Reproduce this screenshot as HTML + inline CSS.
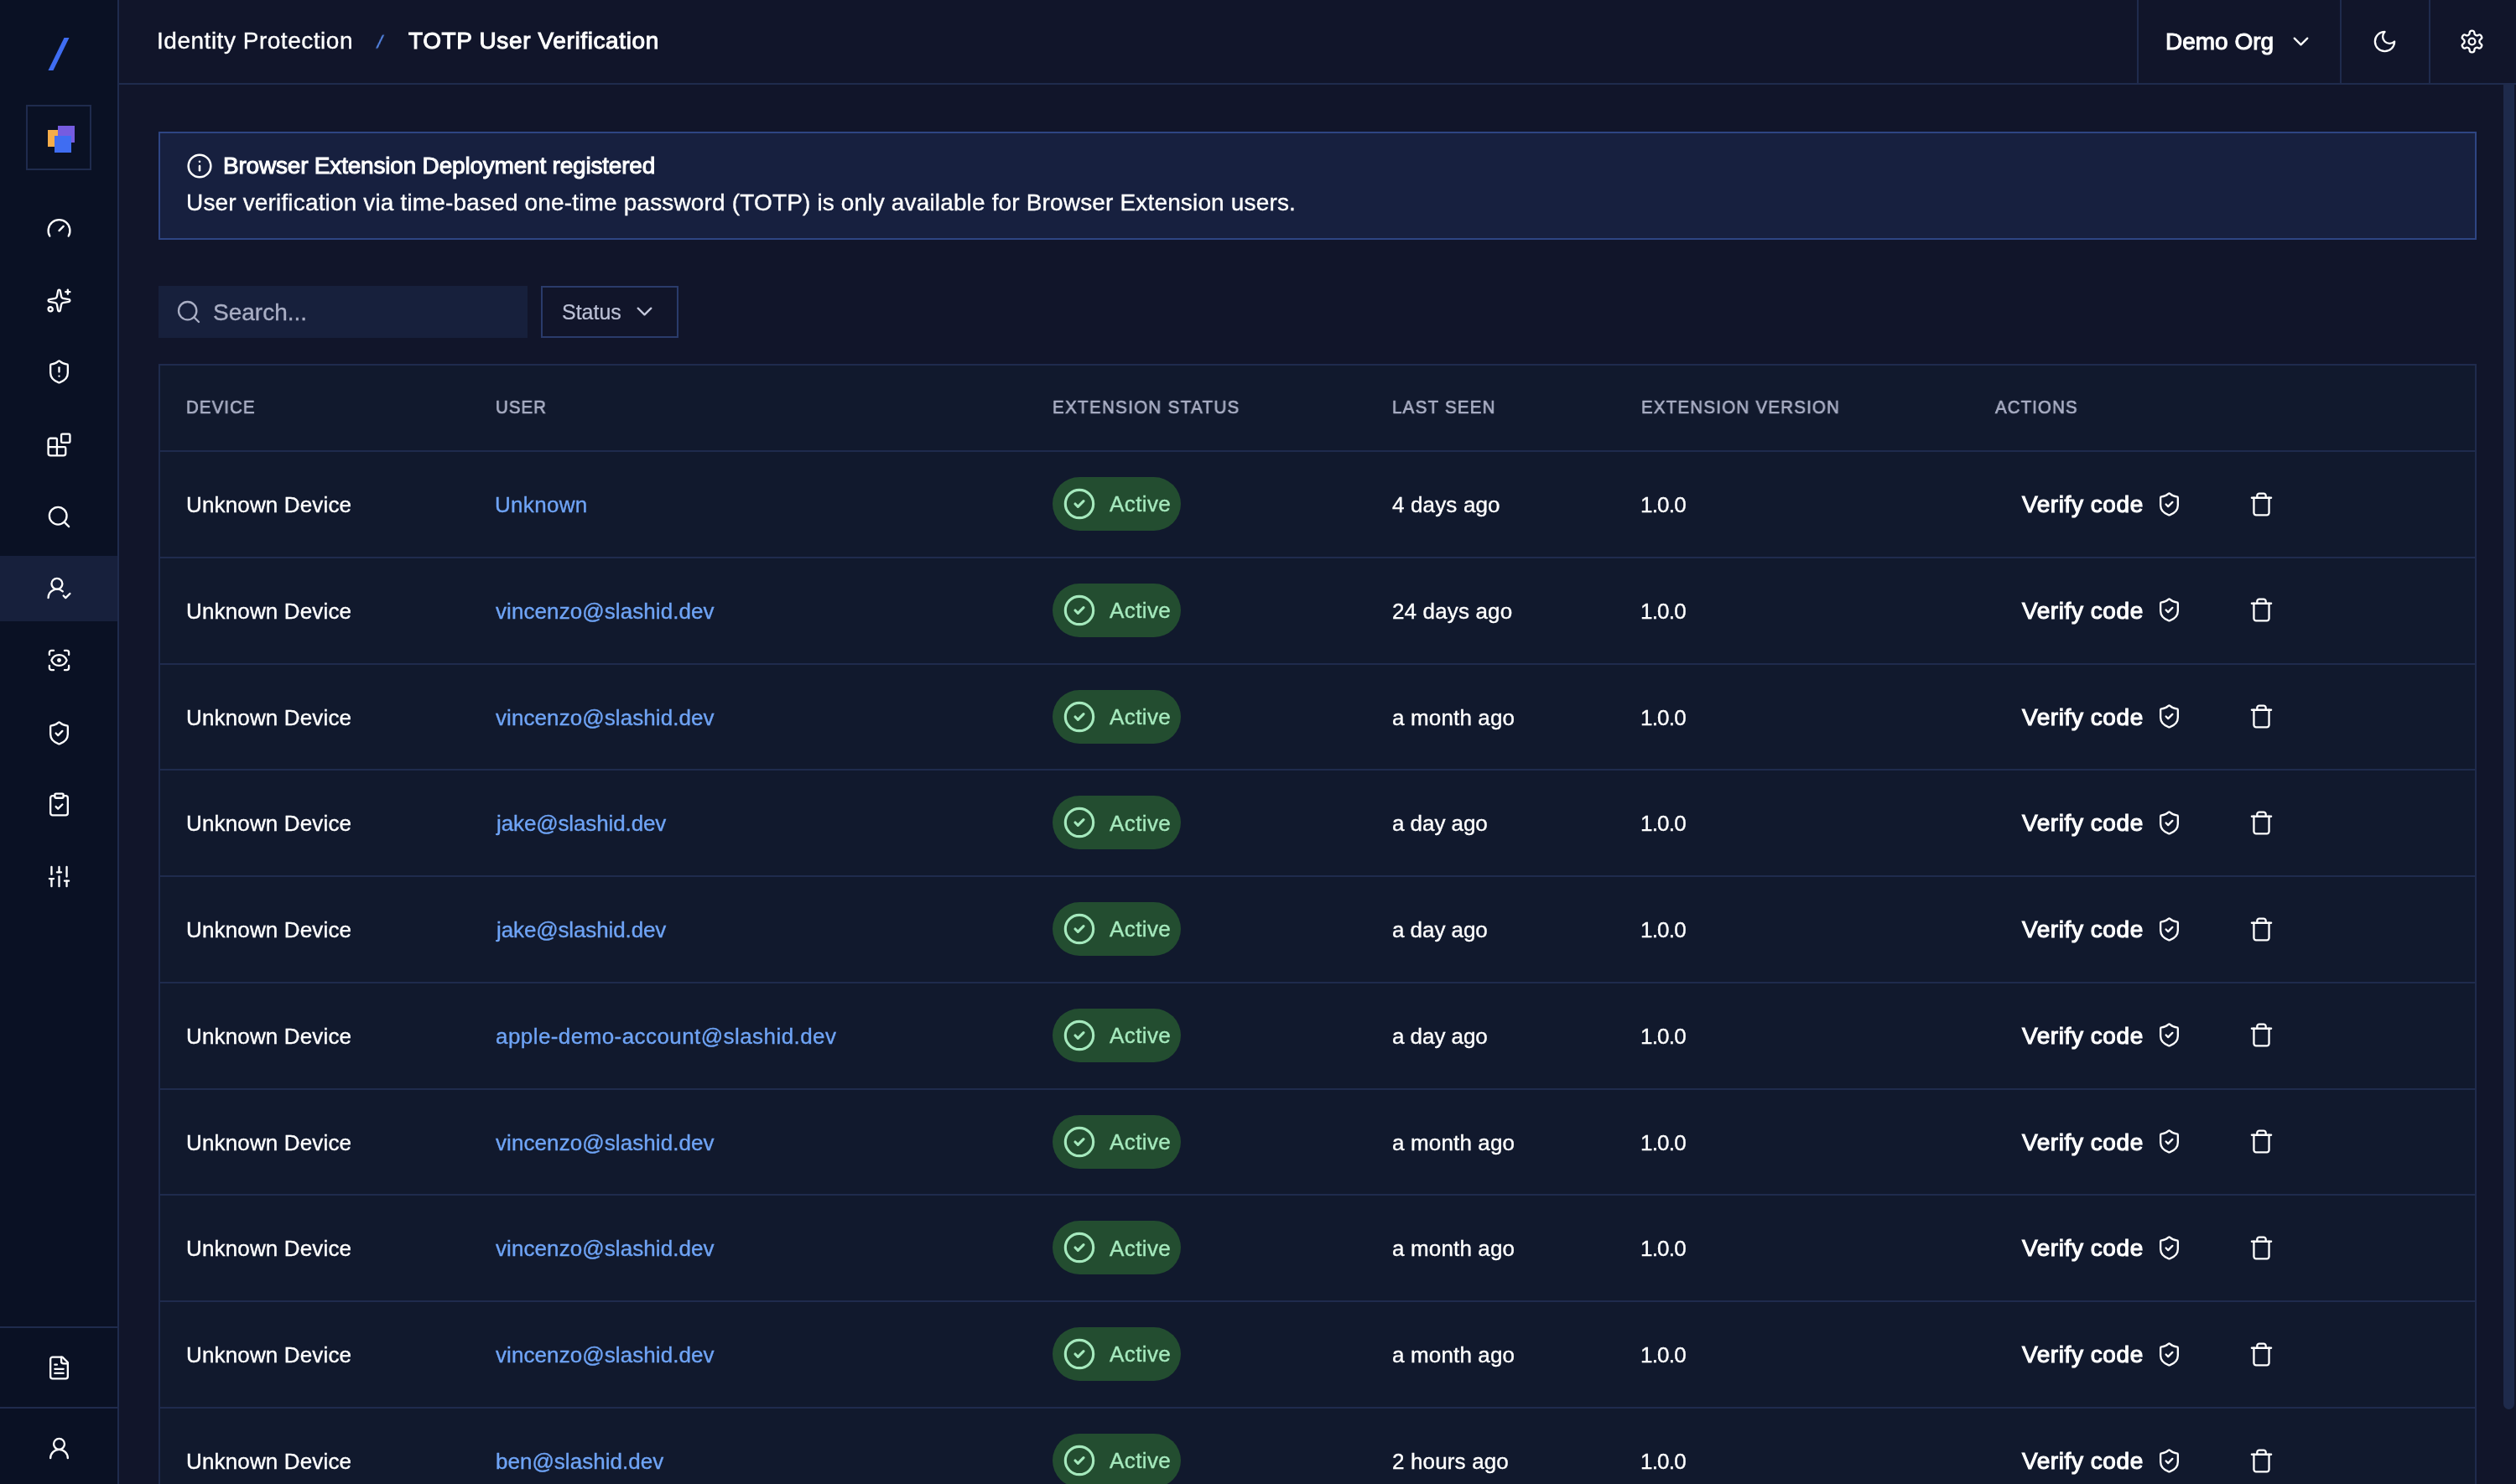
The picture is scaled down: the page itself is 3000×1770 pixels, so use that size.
<!DOCTYPE html>
<html lang="en">
<head>
<meta charset="utf-8">
<title>TOTP User Verification</title>
<style>
*{box-sizing:border-box;margin:0;padding:0}
html,body{width:3000px;height:1770px;overflow:hidden;background:#11152a}
body{position:relative;font-family:"Liberation Sans",sans-serif;color:#ffffff;-webkit-font-smoothing:antialiased}
.abs{position:absolute}
.bc,.al-t,.al-b,.s-t,.st-t,.th,.td,.badge-t{will-change:transform;-webkit-text-stroke-width:0.35px}
.ic{position:absolute;display:block;line-height:0}
.ic svg{display:block}
/* sidebar */
#side{position:absolute;left:0;top:0;width:142px;height:1770px;background:#0a1124;border-right:2px solid #1f2b4d}
.logo{position:absolute;left:67.3px;top:45px;width:6px;height:39px;background:#3f6df2;transform:skewX(-26deg)}
.org{position:absolute;left:31px;top:125px;width:78px;height:78px;border:2px solid #1f2b4d}
.sq{position:absolute;width:20px;height:20px}
.nav-active{position:absolute;left:0;width:140px;height:78px;background:#17203c}
.side-sep{position:absolute;left:0;width:140px;height:2px;background:#1f2b4d}
/* header */
#head{position:absolute;left:142px;top:0;width:2858px;height:101px;border-bottom:2px solid #1f2b4d;background:#11152a}
.bc{position:absolute;top:31px;font-size:28px;line-height:36px;white-space:nowrap}
.vdiv{position:absolute;top:0;width:2px;height:101px;background:#1f2b4d}
/* scrollbar */
#sb{position:absolute;left:2985px;top:101px;width:13px;height:1580px;background:#1e2a4b;border-radius:0 0 6.5px 6.5px}
/* alert */
#alert{position:absolute;left:189px;top:157px;width:2764px;height:129px;background:#17203f;border:2px solid #2e4583}
.al-t{position:absolute;left:75px;top:21px;font-size:28px;line-height:36px;white-space:nowrap;letter-spacing:-0.2px}
.semi{-webkit-text-stroke:1.0px #fff}
.al-b{position:absolute;left:31px;top:65px;font-size:28px;line-height:36px;white-space:nowrap;letter-spacing:0.157px}
/* search */
#search{position:absolute;left:189px;top:341px;width:440px;height:62px;background:#17203c}
.s-t{position:absolute;left:64.8px;top:13.8px;font-size:28px;line-height:36px;color:#a9aec4;white-space:nowrap}
#status{position:absolute;left:645px;top:341px;width:164px;height:62px;border:2px solid #2a3b6b}
.st-t{position:absolute;left:23px;top:12.5px;font-size:25px;line-height:32px;color:#bcc1d6;white-space:nowrap;-webkit-text-stroke-width:0.2px !important}
/* table */
#table{position:absolute;left:189px;top:434px;width:2764px;height:1400px;border:2px solid #1f2b4d;background:#11192d}
.th{position:absolute;top:36px;font-size:22px;line-height:28px;transform:scaleX(0.93);transform-origin:0 50%;-webkit-text-stroke:0.7px #a9aec4;color:#a9aec4;letter-spacing:1.2px;white-space:nowrap}
.hr{position:absolute;left:0;top:101px;width:2760px;height:2px;background:#1f2b4d}
.tr{position:absolute;left:0;width:2760px;height:126.78px;border-bottom:2px solid #1f2b4d}
.td{position:absolute;top:47px;font-size:26px;line-height:32px;white-space:nowrap;color:#fff;text-decoration:none;letter-spacing:0.15px}
.c-dev{left:31px}
.c-user{left:400px;color:#6fa4f6}
.c-seen{left:1469px}
.c-ver{left:1765px;letter-spacing:-0.8px}
.c-verify{left:2220px;font-size:28px;top:45px;line-height:36px;-webkit-text-stroke:1.1px #fff;letter-spacing:0.57px}
.badge{position:absolute;left:1064px;top:30px;width:153px;height:64px;border-radius:32px;background:#234d30}
.badge svg{position:absolute;left:12px;top:12px}
.badge-t{position:absolute;left:68px;top:16.2px;letter-spacing:0.4px;font-size:26px;line-height:32px;color:#a5e9bd;white-space:nowrap}
.i-shield{left:2379.6px;top:46.5px}
.i-trash{left:2489.5px;top:46.5px}
</style>
</head>
<body>
<div id="side">
<div class="logo"></div>
<div class="org"></div>
<div class="sq" style="left:57px;top:155px;background:#f5ad4a"></div>
<div class="sq" style="left:69px;top:150px;background:#765ce0"></div>
<div class="sq" style="left:65px;top:162px;background:#3f6df2"></div>
<span class="ic" style="left:54.80px;top:257.40px;width:31px;height:31px"><svg width="31" height="31" viewBox="0 0 24 24" fill="none" stroke="#fff" stroke-width="1.8" stroke-linecap="round" stroke-linejoin="round" ><path d="m12 14 4-4"/><path d="M3.34 19a10 10 0 1 1 17.32 0"/></svg></span><span class="ic" style="left:54.80px;top:343.05px;width:31px;height:31px"><svg width="31" height="31" viewBox="0 0 24 24" fill="none" stroke="#fff" stroke-width="1.8" stroke-linecap="round" stroke-linejoin="round" ><path d="M11.017 2.814a1 1 0 0 1 1.966 0l1.051 5.558a2 2 0 0 0 1.594 1.594l5.558 1.051a1 1 0 0 1 0 1.966l-5.558 1.051a2 2 0 0 0-1.594 1.594l-1.051 5.558a1 1 0 0 1-1.966 0l-1.051-5.558a2 2 0 0 0-1.594-1.594l-5.558-1.051a1 1 0 0 1 0-1.966l5.558-1.051a2 2 0 0 0 1.594-1.594z"/><path d="M20 2v4"/><path d="M22 4h-4"/><circle cx="4" cy="20" r="2"/></svg></span><span class="ic" style="left:54.80px;top:428.40px;width:31px;height:31px"><svg width="31" height="31" viewBox="0 0 24 24" fill="none" stroke="#fff" stroke-width="1.8" stroke-linecap="round" stroke-linejoin="round" ><path d="M20 13c0 5-3.5 7.5-7.66 8.95a1 1 0 0 1-.67-.01C7.5 20.5 4 18 4 13V6a1 1 0 0 1 1-1c2 0 4.5-1.2 6.24-2.72a1.17 1.17 0 0 1 1.52 0C14.51 3.81 17 5 19 5a1 1 0 0 1 1 1z"/><path d="M12 8v4"/><path d="M12 16h.01"/></svg></span><span class="ic" style="left:54.80px;top:515.25px;width:31px;height:31px"><svg width="31" height="31" viewBox="0 0 24 24" fill="none" stroke="#fff" stroke-width="1.8" stroke-linecap="round" stroke-linejoin="round" ><path d="M10 22V7a1 1 0 0 0-1-1H4a2 2 0 0 0-2 2v12a2 2 0 0 0 2 2h12a2 2 0 0 0 2-2v-5a1 1 0 0 0-1-1H2"/><rect x="14" y="2" width="8" height="8" rx="1"/></svg></span><span class="ic" style="left:54.80px;top:601.40px;width:31px;height:31px"><svg width="31" height="31" viewBox="0 0 24 24" fill="none" stroke="#fff" stroke-width="1.8" stroke-linecap="round" stroke-linejoin="round" ><circle cx="11" cy="11" r="8"/><path d="m21 21-4.3-4.3"/></svg></span><div class="nav-active" style="top:662.95px"></div><span class="ic" style="left:54.80px;top:686.05px;width:31px;height:31px"><svg width="31" height="31" viewBox="0 0 24 24" fill="none" stroke="#fff" stroke-width="1.8" stroke-linecap="round" stroke-linejoin="round" ><path d="M2 21a8 8 0 0 1 13.292-6"/><circle cx="10" cy="8" r="5"/><path d="m16 19 2 2 4-4"/></svg></span><span class="ic" style="left:54.80px;top:771.60px;width:31px;height:31px"><svg width="31" height="31" viewBox="0 0 24 24" fill="none" stroke="#fff" stroke-width="1.8" stroke-linecap="round" stroke-linejoin="round" ><path d="M3 7V5a2 2 0 0 1 2-2h2"/><path d="M17 3h2a2 2 0 0 1 2 2v2"/><path d="M21 17v2a2 2 0 0 1-2 2h-2"/><path d="M7 21H5a2 2 0 0 1-2-2v-2"/><circle cx="12" cy="12" r="1"/><path d="M18.944 12.33a1 1 0 0 0 0-.66 7.5 7.5 0 0 0-13.888 0 1 1 0 0 0 0 .66 7.5 7.5 0 0 0 13.888 0"/></svg></span><span class="ic" style="left:54.80px;top:858.55px;width:31px;height:31px"><svg width="31" height="31" viewBox="0 0 24 24" fill="none" stroke="#fff" stroke-width="1.8" stroke-linecap="round" stroke-linejoin="round" ><path d="M20 13c0 5-3.5 7.5-7.66 8.95a1 1 0 0 1-.67-.01C7.5 20.5 4 18 4 13V6a1 1 0 0 1 1-1c2 0 4.5-1.2 6.24-2.72a1.17 1.17 0 0 1 1.52 0C14.51 3.81 17 5 19 5a1 1 0 0 1 1 1z"/><path d="m9 12 2 2 4-4"/></svg></span><span class="ic" style="left:54.80px;top:944.00px;width:31px;height:31px"><svg width="31" height="31" viewBox="0 0 24 24" fill="none" stroke="#fff" stroke-width="1.8" stroke-linecap="round" stroke-linejoin="round" ><rect width="8" height="4" x="8" y="2" rx="1" ry="1"/><path d="M16 4h2a2 2 0 0 1 2 2v14a2 2 0 0 1-2 2H6a2 2 0 0 1-2-2V6a2 2 0 0 1 2-2h2"/><path d="m9 14 2 2 4-4"/></svg></span><span class="ic" style="left:54.80px;top:1029.85px;width:31px;height:31px"><svg width="31" height="31" viewBox="0 0 24 24" fill="none" stroke="#fff" stroke-width="1.8" stroke-linecap="round" stroke-linejoin="round" ><path d="M10 8h4"/><path d="M12 21v-9"/><path d="M12 8V3"/><path d="M17 16h4"/><path d="M19 12V3"/><path d="M19 21v-5"/><path d="M3 14h4"/><path d="M5 10V3"/><path d="M5 21v-7"/></svg></span><div class="side-sep" style="top:1582px"></div><span class="ic" style="left:54.90px;top:1616.30px;width:31px;height:31px"><svg width="31" height="31" viewBox="0 0 24 24" fill="none" stroke="#fff" stroke-width="1.8" stroke-linecap="round" stroke-linejoin="round" ><path d="M15 2H6a2 2 0 0 0-2 2v16a2 2 0 0 0 2 2h12a2 2 0 0 0 2-2V7Z"/><path d="M14 2v4a2 2 0 0 0 2 2h4"/><path d="M10 9H8"/><path d="M16 13H8"/><path d="M16 17H8"/></svg></span><div class="side-sep" style="top:1678px"></div><span class="ic" style="left:54.90px;top:1711.70px;width:31px;height:31px"><svg width="31" height="31" viewBox="0 0 24 24" fill="none" stroke="#fff" stroke-width="1.8" stroke-linecap="round" stroke-linejoin="round" ><circle cx="12" cy="8" r="5"/><path d="M20 21a8 8 0 0 0-16 0"/></svg></span>
</div>
<div id="head">
<span class="bc" id="bc1" style="left:44.5px;letter-spacing:0.52px">Identity Protection</span>
<span class="bc" id="bc2" style="left:307.8px;top:31.5px;color:#5a8ff5;font-size:22px;transform:skewX(-12deg);-webkit-text-stroke-width:0.3px">/</span>
<span class="bc semi" id="bc3" style="left:345px;letter-spacing:0.62px">TOTP User Verification</span>
<div class="vdiv" style="left:2406px"></div>
<span class="bc semi" id="org" style="left:2440px;top:32.4px">Demo Org</span>
<span class="ic" style="left:2586.00px;top:33.50px;width:31px;height:31px"><svg width="31" height="31" viewBox="0 0 24 24" fill="none" stroke="#fff" stroke-width="1.8" stroke-linecap="round" stroke-linejoin="round" ><path d="m6 9 6 6 6-6"/></svg></span>
<div class="vdiv" style="left:2648px"></div>
<span class="ic" style="left:2685.50px;top:33.50px;width:31px;height:31px"><svg width="31" height="31" viewBox="0 0 24 24" fill="none" stroke="#fff" stroke-width="1.8" stroke-linecap="round" stroke-linejoin="round" ><path d="M12 3a6 6 0 0 0 9 9 9 9 0 1 1-9-9Z"/></svg></span>
<div class="vdiv" style="left:2754px"></div>
<span class="ic" style="left:2789.50px;top:33.70px;width:31px;height:31px"><svg width="31" height="31" viewBox="0 0 24 24" fill="none" stroke="#fff" stroke-width="1.8" stroke-linecap="round" stroke-linejoin="round" ><path d="M12.22 2h-.44a2 2 0 0 0-2 2v.18a2 2 0 0 1-1 1.73l-.43.25a2 2 0 0 1-2 0l-.15-.08a2 2 0 0 0-2.73.73l-.22.38a2 2 0 0 0 .73 2.73l.15.1a2 2 0 0 1 1 1.72v.51a2 2 0 0 1-1 1.74l-.15.09a2 2 0 0 0-.73 2.73l.22.38a2 2 0 0 0 2.73.73l.15-.08a2 2 0 0 1 2 0l.43.25a2 2 0 0 1 1 1.73V20a2 2 0 0 0 2 2h.44a2 2 0 0 0 2-2v-.18a2 2 0 0 1 1-1.73l.43-.25a2 2 0 0 1 2 0l.15.08a2 2 0 0 0 2.73-.73l.22-.39a2 2 0 0 0-.73-2.73l-.15-.08a2 2 0 0 1-1-1.74v-.5a2 2 0 0 1 1-1.74l.15-.09a2 2 0 0 0 .73-2.73l-.22-.38a2 2 0 0 0-2.73-.73l-.15.08a2 2 0 0 1-2 0l-.43-.25a2 2 0 0 1-1-1.73V4a2 2 0 0 0-2-2z"/><circle cx="12" cy="12" r="3"/></svg></span>
</div>
<div id="sb"></div>
<div id="alert">
<span class="ic" style="left:31.00px;top:23.30px;width:32px;height:32px"><svg width="32" height="32" viewBox="0 0 24 24" fill="none" stroke="#fff" stroke-width="1.9" stroke-linecap="round" stroke-linejoin="round" ><circle cx="12" cy="12" r="10"/><path d="M12 16v-4"/><path d="M12 8h.01"/></svg></span>
<span class="al-t semi" id="alt">Browser Extension Deployment registered</span>
<span class="al-b" id="alb">User verification via time-based one-time password (TOTP) is only available for Browser Extension users.</span>
</div>
<div id="search">
<span class="ic" style="left:19.60px;top:14.90px;width:32px;height:32px"><svg width="32" height="32" viewBox="0 0 24 24" fill="none" stroke="#a9aec4" stroke-width="1.75" stroke-linecap="round" stroke-linejoin="round" ><circle cx="11" cy="11" r="8"/><path d="m21 21-4.3-4.3"/></svg></span>
<span class="s-t" id="st">Search...</span>
</div>
<div id="status">
<span class="st-t" id="stt">Status</span>
<span class="ic" style="left:106.00px;top:13.00px;width:31px;height:31px"><svg width="31" height="31" viewBox="0 0 24 24" fill="none" stroke="#c4c8dc" stroke-width="1.8" stroke-linecap="round" stroke-linejoin="round" ><path d="m6 9 6 6 6-6"/></svg></span>
</div>
<div id="table">
<span class="th" id="th1" style="letter-spacing:1.17px;left:31px">DEVICE</span>
<span class="th" id="th2" style="letter-spacing:1.07px;left:400px">USER</span>
<span class="th" id="th3" style="letter-spacing:1.48px;left:1064px">EXTENSION STATUS</span>
<span class="th" id="th4" style="letter-spacing:1.38px;left:1469px">LAST SEEN</span>
<span class="th" id="th5" style="letter-spacing:1.34px;left:1766px">EXTENSION VERSION</span>
<span class="th" id="th6" style="letter-spacing:1.19px;left:2188px">ACTIONS</span>
<div class="hr"></div>
<div class="tr" style="top:103.00px">
<span class="td c-dev">Unknown Device</span>
<a class="td c-user" style="letter-spacing:0.3px;margin-left:-1.5px">Unknown</a>
<span class="badge"><svg width="40" height="40" viewBox="0 0 24 24" fill="none" stroke="#a5e9bd" stroke-width="1.9" stroke-linecap="round" stroke-linejoin="round" ><circle cx="12" cy="12" r="10"/><path d="m9 12 2 2 4-4"/></svg><span class="badge-t">Active</span></span>
<span class="td c-seen" style="letter-spacing:0.15px">4 days ago</span>
<span class="td c-ver">1.0.0</span>
<span class="td c-verify">Verify code</span>
<span class="ic i-shield"><svg width="31" height="31" viewBox="0 0 24 24" fill="none" stroke="#fff" stroke-width="1.8" stroke-linecap="round" stroke-linejoin="round" ><path d="M20 13c0 5-3.5 7.5-7.66 8.95a1 1 0 0 1-.67-.01C7.5 20.5 4 18 4 13V6a1 1 0 0 1 1-1c2 0 4.5-1.2 6.24-2.72a1.17 1.17 0 0 1 1.52 0C14.51 3.81 17 5 19 5a1 1 0 0 1 1 1z"/><path d="m9 12 2 2 4-4"/></svg></span>
<span class="ic i-trash"><svg width="31" height="31" viewBox="0 0 24 24" fill="none" stroke="#fff" stroke-width="1.8" stroke-linecap="round" stroke-linejoin="round" ><path d="M3 6h18"/><path d="M19 6v14c0 1-1 2-2 2H7c-1 0-2-1-2-2V6"/><path d="M8 6V4c0-1 1-2 2-2h4c1 0 2 1 2 2v2"/></svg></span>
</div><div class="tr" style="top:229.78px">
<span class="td c-dev">Unknown Device</span>
<a class="td c-user" style="letter-spacing:0.08px;margin-left:0px">vincenzo@slashid.dev</a>
<span class="badge"><svg width="40" height="40" viewBox="0 0 24 24" fill="none" stroke="#a5e9bd" stroke-width="1.9" stroke-linecap="round" stroke-linejoin="round" ><circle cx="12" cy="12" r="10"/><path d="m9 12 2 2 4-4"/></svg><span class="badge-t">Active</span></span>
<span class="td c-seen" style="letter-spacing:0.15px">24 days ago</span>
<span class="td c-ver">1.0.0</span>
<span class="td c-verify">Verify code</span>
<span class="ic i-shield"><svg width="31" height="31" viewBox="0 0 24 24" fill="none" stroke="#fff" stroke-width="1.8" stroke-linecap="round" stroke-linejoin="round" ><path d="M20 13c0 5-3.5 7.5-7.66 8.95a1 1 0 0 1-.67-.01C7.5 20.5 4 18 4 13V6a1 1 0 0 1 1-1c2 0 4.5-1.2 6.24-2.72a1.17 1.17 0 0 1 1.52 0C14.51 3.81 17 5 19 5a1 1 0 0 1 1 1z"/><path d="m9 12 2 2 4-4"/></svg></span>
<span class="ic i-trash"><svg width="31" height="31" viewBox="0 0 24 24" fill="none" stroke="#fff" stroke-width="1.8" stroke-linecap="round" stroke-linejoin="round" ><path d="M3 6h18"/><path d="M19 6v14c0 1-1 2-2 2H7c-1 0-2-1-2-2V6"/><path d="M8 6V4c0-1 1-2 2-2h4c1 0 2 1 2 2v2"/></svg></span>
</div><div class="tr" style="top:356.56px">
<span class="td c-dev">Unknown Device</span>
<a class="td c-user" style="letter-spacing:0.08px;margin-left:0px">vincenzo@slashid.dev</a>
<span class="badge"><svg width="40" height="40" viewBox="0 0 24 24" fill="none" stroke="#a5e9bd" stroke-width="1.9" stroke-linecap="round" stroke-linejoin="round" ><circle cx="12" cy="12" r="10"/><path d="m9 12 2 2 4-4"/></svg><span class="badge-t">Active</span></span>
<span class="td c-seen" style="letter-spacing:0.15px">a month ago</span>
<span class="td c-ver">1.0.0</span>
<span class="td c-verify">Verify code</span>
<span class="ic i-shield"><svg width="31" height="31" viewBox="0 0 24 24" fill="none" stroke="#fff" stroke-width="1.8" stroke-linecap="round" stroke-linejoin="round" ><path d="M20 13c0 5-3.5 7.5-7.66 8.95a1 1 0 0 1-.67-.01C7.5 20.5 4 18 4 13V6a1 1 0 0 1 1-1c2 0 4.5-1.2 6.24-2.72a1.17 1.17 0 0 1 1.52 0C14.51 3.81 17 5 19 5a1 1 0 0 1 1 1z"/><path d="m9 12 2 2 4-4"/></svg></span>
<span class="ic i-trash"><svg width="31" height="31" viewBox="0 0 24 24" fill="none" stroke="#fff" stroke-width="1.8" stroke-linecap="round" stroke-linejoin="round" ><path d="M3 6h18"/><path d="M19 6v14c0 1-1 2-2 2H7c-1 0-2-1-2-2V6"/><path d="M8 6V4c0-1 1-2 2-2h4c1 0 2 1 2 2v2"/></svg></span>
</div><div class="tr" style="top:483.34px">
<span class="td c-dev">Unknown Device</span>
<a class="td c-user" style="letter-spacing:-0.12px;margin-left:1px">jake@slashid.dev</a>
<span class="badge"><svg width="40" height="40" viewBox="0 0 24 24" fill="none" stroke="#a5e9bd" stroke-width="1.9" stroke-linecap="round" stroke-linejoin="round" ><circle cx="12" cy="12" r="10"/><path d="m9 12 2 2 4-4"/></svg><span class="badge-t">Active</span></span>
<span class="td c-seen" style="letter-spacing:-0.05px">a day ago</span>
<span class="td c-ver">1.0.0</span>
<span class="td c-verify">Verify code</span>
<span class="ic i-shield"><svg width="31" height="31" viewBox="0 0 24 24" fill="none" stroke="#fff" stroke-width="1.8" stroke-linecap="round" stroke-linejoin="round" ><path d="M20 13c0 5-3.5 7.5-7.66 8.95a1 1 0 0 1-.67-.01C7.5 20.5 4 18 4 13V6a1 1 0 0 1 1-1c2 0 4.5-1.2 6.24-2.72a1.17 1.17 0 0 1 1.52 0C14.51 3.81 17 5 19 5a1 1 0 0 1 1 1z"/><path d="m9 12 2 2 4-4"/></svg></span>
<span class="ic i-trash"><svg width="31" height="31" viewBox="0 0 24 24" fill="none" stroke="#fff" stroke-width="1.8" stroke-linecap="round" stroke-linejoin="round" ><path d="M3 6h18"/><path d="M19 6v14c0 1-1 2-2 2H7c-1 0-2-1-2-2V6"/><path d="M8 6V4c0-1 1-2 2-2h4c1 0 2 1 2 2v2"/></svg></span>
</div><div class="tr" style="top:610.12px">
<span class="td c-dev">Unknown Device</span>
<a class="td c-user" style="letter-spacing:-0.12px;margin-left:1px">jake@slashid.dev</a>
<span class="badge"><svg width="40" height="40" viewBox="0 0 24 24" fill="none" stroke="#a5e9bd" stroke-width="1.9" stroke-linecap="round" stroke-linejoin="round" ><circle cx="12" cy="12" r="10"/><path d="m9 12 2 2 4-4"/></svg><span class="badge-t">Active</span></span>
<span class="td c-seen" style="letter-spacing:-0.05px">a day ago</span>
<span class="td c-ver">1.0.0</span>
<span class="td c-verify">Verify code</span>
<span class="ic i-shield"><svg width="31" height="31" viewBox="0 0 24 24" fill="none" stroke="#fff" stroke-width="1.8" stroke-linecap="round" stroke-linejoin="round" ><path d="M20 13c0 5-3.5 7.5-7.66 8.95a1 1 0 0 1-.67-.01C7.5 20.5 4 18 4 13V6a1 1 0 0 1 1-1c2 0 4.5-1.2 6.24-2.72a1.17 1.17 0 0 1 1.52 0C14.51 3.81 17 5 19 5a1 1 0 0 1 1 1z"/><path d="m9 12 2 2 4-4"/></svg></span>
<span class="ic i-trash"><svg width="31" height="31" viewBox="0 0 24 24" fill="none" stroke="#fff" stroke-width="1.8" stroke-linecap="round" stroke-linejoin="round" ><path d="M3 6h18"/><path d="M19 6v14c0 1-1 2-2 2H7c-1 0-2-1-2-2V6"/><path d="M8 6V4c0-1 1-2 2-2h4c1 0 2 1 2 2v2"/></svg></span>
</div><div class="tr" style="top:736.90px">
<span class="td c-dev">Unknown Device</span>
<a class="td c-user" style="letter-spacing:0.43px;margin-left:-0.5px">apple-demo-account@slashid.dev</a>
<span class="badge"><svg width="40" height="40" viewBox="0 0 24 24" fill="none" stroke="#a5e9bd" stroke-width="1.9" stroke-linecap="round" stroke-linejoin="round" ><circle cx="12" cy="12" r="10"/><path d="m9 12 2 2 4-4"/></svg><span class="badge-t">Active</span></span>
<span class="td c-seen" style="letter-spacing:-0.05px">a day ago</span>
<span class="td c-ver">1.0.0</span>
<span class="td c-verify">Verify code</span>
<span class="ic i-shield"><svg width="31" height="31" viewBox="0 0 24 24" fill="none" stroke="#fff" stroke-width="1.8" stroke-linecap="round" stroke-linejoin="round" ><path d="M20 13c0 5-3.5 7.5-7.66 8.95a1 1 0 0 1-.67-.01C7.5 20.5 4 18 4 13V6a1 1 0 0 1 1-1c2 0 4.5-1.2 6.24-2.72a1.17 1.17 0 0 1 1.52 0C14.51 3.81 17 5 19 5a1 1 0 0 1 1 1z"/><path d="m9 12 2 2 4-4"/></svg></span>
<span class="ic i-trash"><svg width="31" height="31" viewBox="0 0 24 24" fill="none" stroke="#fff" stroke-width="1.8" stroke-linecap="round" stroke-linejoin="round" ><path d="M3 6h18"/><path d="M19 6v14c0 1-1 2-2 2H7c-1 0-2-1-2-2V6"/><path d="M8 6V4c0-1 1-2 2-2h4c1 0 2 1 2 2v2"/></svg></span>
</div><div class="tr" style="top:863.68px">
<span class="td c-dev">Unknown Device</span>
<a class="td c-user" style="letter-spacing:0.08px;margin-left:0px">vincenzo@slashid.dev</a>
<span class="badge"><svg width="40" height="40" viewBox="0 0 24 24" fill="none" stroke="#a5e9bd" stroke-width="1.9" stroke-linecap="round" stroke-linejoin="round" ><circle cx="12" cy="12" r="10"/><path d="m9 12 2 2 4-4"/></svg><span class="badge-t">Active</span></span>
<span class="td c-seen" style="letter-spacing:0.15px">a month ago</span>
<span class="td c-ver">1.0.0</span>
<span class="td c-verify">Verify code</span>
<span class="ic i-shield"><svg width="31" height="31" viewBox="0 0 24 24" fill="none" stroke="#fff" stroke-width="1.8" stroke-linecap="round" stroke-linejoin="round" ><path d="M20 13c0 5-3.5 7.5-7.66 8.95a1 1 0 0 1-.67-.01C7.5 20.5 4 18 4 13V6a1 1 0 0 1 1-1c2 0 4.5-1.2 6.24-2.72a1.17 1.17 0 0 1 1.52 0C14.51 3.81 17 5 19 5a1 1 0 0 1 1 1z"/><path d="m9 12 2 2 4-4"/></svg></span>
<span class="ic i-trash"><svg width="31" height="31" viewBox="0 0 24 24" fill="none" stroke="#fff" stroke-width="1.8" stroke-linecap="round" stroke-linejoin="round" ><path d="M3 6h18"/><path d="M19 6v14c0 1-1 2-2 2H7c-1 0-2-1-2-2V6"/><path d="M8 6V4c0-1 1-2 2-2h4c1 0 2 1 2 2v2"/></svg></span>
</div><div class="tr" style="top:990.46px">
<span class="td c-dev">Unknown Device</span>
<a class="td c-user" style="letter-spacing:0.08px;margin-left:0px">vincenzo@slashid.dev</a>
<span class="badge"><svg width="40" height="40" viewBox="0 0 24 24" fill="none" stroke="#a5e9bd" stroke-width="1.9" stroke-linecap="round" stroke-linejoin="round" ><circle cx="12" cy="12" r="10"/><path d="m9 12 2 2 4-4"/></svg><span class="badge-t">Active</span></span>
<span class="td c-seen" style="letter-spacing:0.15px">a month ago</span>
<span class="td c-ver">1.0.0</span>
<span class="td c-verify">Verify code</span>
<span class="ic i-shield"><svg width="31" height="31" viewBox="0 0 24 24" fill="none" stroke="#fff" stroke-width="1.8" stroke-linecap="round" stroke-linejoin="round" ><path d="M20 13c0 5-3.5 7.5-7.66 8.95a1 1 0 0 1-.67-.01C7.5 20.5 4 18 4 13V6a1 1 0 0 1 1-1c2 0 4.5-1.2 6.24-2.72a1.17 1.17 0 0 1 1.52 0C14.51 3.81 17 5 19 5a1 1 0 0 1 1 1z"/><path d="m9 12 2 2 4-4"/></svg></span>
<span class="ic i-trash"><svg width="31" height="31" viewBox="0 0 24 24" fill="none" stroke="#fff" stroke-width="1.8" stroke-linecap="round" stroke-linejoin="round" ><path d="M3 6h18"/><path d="M19 6v14c0 1-1 2-2 2H7c-1 0-2-1-2-2V6"/><path d="M8 6V4c0-1 1-2 2-2h4c1 0 2 1 2 2v2"/></svg></span>
</div><div class="tr" style="top:1117.24px">
<span class="td c-dev">Unknown Device</span>
<a class="td c-user" style="letter-spacing:0.08px;margin-left:0px">vincenzo@slashid.dev</a>
<span class="badge"><svg width="40" height="40" viewBox="0 0 24 24" fill="none" stroke="#a5e9bd" stroke-width="1.9" stroke-linecap="round" stroke-linejoin="round" ><circle cx="12" cy="12" r="10"/><path d="m9 12 2 2 4-4"/></svg><span class="badge-t">Active</span></span>
<span class="td c-seen" style="letter-spacing:0.15px">a month ago</span>
<span class="td c-ver">1.0.0</span>
<span class="td c-verify">Verify code</span>
<span class="ic i-shield"><svg width="31" height="31" viewBox="0 0 24 24" fill="none" stroke="#fff" stroke-width="1.8" stroke-linecap="round" stroke-linejoin="round" ><path d="M20 13c0 5-3.5 7.5-7.66 8.95a1 1 0 0 1-.67-.01C7.5 20.5 4 18 4 13V6a1 1 0 0 1 1-1c2 0 4.5-1.2 6.24-2.72a1.17 1.17 0 0 1 1.52 0C14.51 3.81 17 5 19 5a1 1 0 0 1 1 1z"/><path d="m9 12 2 2 4-4"/></svg></span>
<span class="ic i-trash"><svg width="31" height="31" viewBox="0 0 24 24" fill="none" stroke="#fff" stroke-width="1.8" stroke-linecap="round" stroke-linejoin="round" ><path d="M3 6h18"/><path d="M19 6v14c0 1-1 2-2 2H7c-1 0-2-1-2-2V6"/><path d="M8 6V4c0-1 1-2 2-2h4c1 0 2 1 2 2v2"/></svg></span>
</div><div class="tr" style="top:1244.02px">
<span class="td c-dev">Unknown Device</span>
<a class="td c-user" style="letter-spacing:0.02px;margin-left:-0.5px">ben@slashid.dev</a>
<span class="badge"><svg width="40" height="40" viewBox="0 0 24 24" fill="none" stroke="#a5e9bd" stroke-width="1.9" stroke-linecap="round" stroke-linejoin="round" ><circle cx="12" cy="12" r="10"/><path d="m9 12 2 2 4-4"/></svg><span class="badge-t">Active</span></span>
<span class="td c-seen" style="letter-spacing:0.15px">2 hours ago</span>
<span class="td c-ver">1.0.0</span>
<span class="td c-verify">Verify code</span>
<span class="ic i-shield"><svg width="31" height="31" viewBox="0 0 24 24" fill="none" stroke="#fff" stroke-width="1.8" stroke-linecap="round" stroke-linejoin="round" ><path d="M20 13c0 5-3.5 7.5-7.66 8.95a1 1 0 0 1-.67-.01C7.5 20.5 4 18 4 13V6a1 1 0 0 1 1-1c2 0 4.5-1.2 6.24-2.72a1.17 1.17 0 0 1 1.52 0C14.51 3.81 17 5 19 5a1 1 0 0 1 1 1z"/><path d="m9 12 2 2 4-4"/></svg></span>
<span class="ic i-trash"><svg width="31" height="31" viewBox="0 0 24 24" fill="none" stroke="#fff" stroke-width="1.8" stroke-linecap="round" stroke-linejoin="round" ><path d="M3 6h18"/><path d="M19 6v14c0 1-1 2-2 2H7c-1 0-2-1-2-2V6"/><path d="M8 6V4c0-1 1-2 2-2h4c1 0 2 1 2 2v2"/></svg></span>
</div>
</div>
</body>
</html>
